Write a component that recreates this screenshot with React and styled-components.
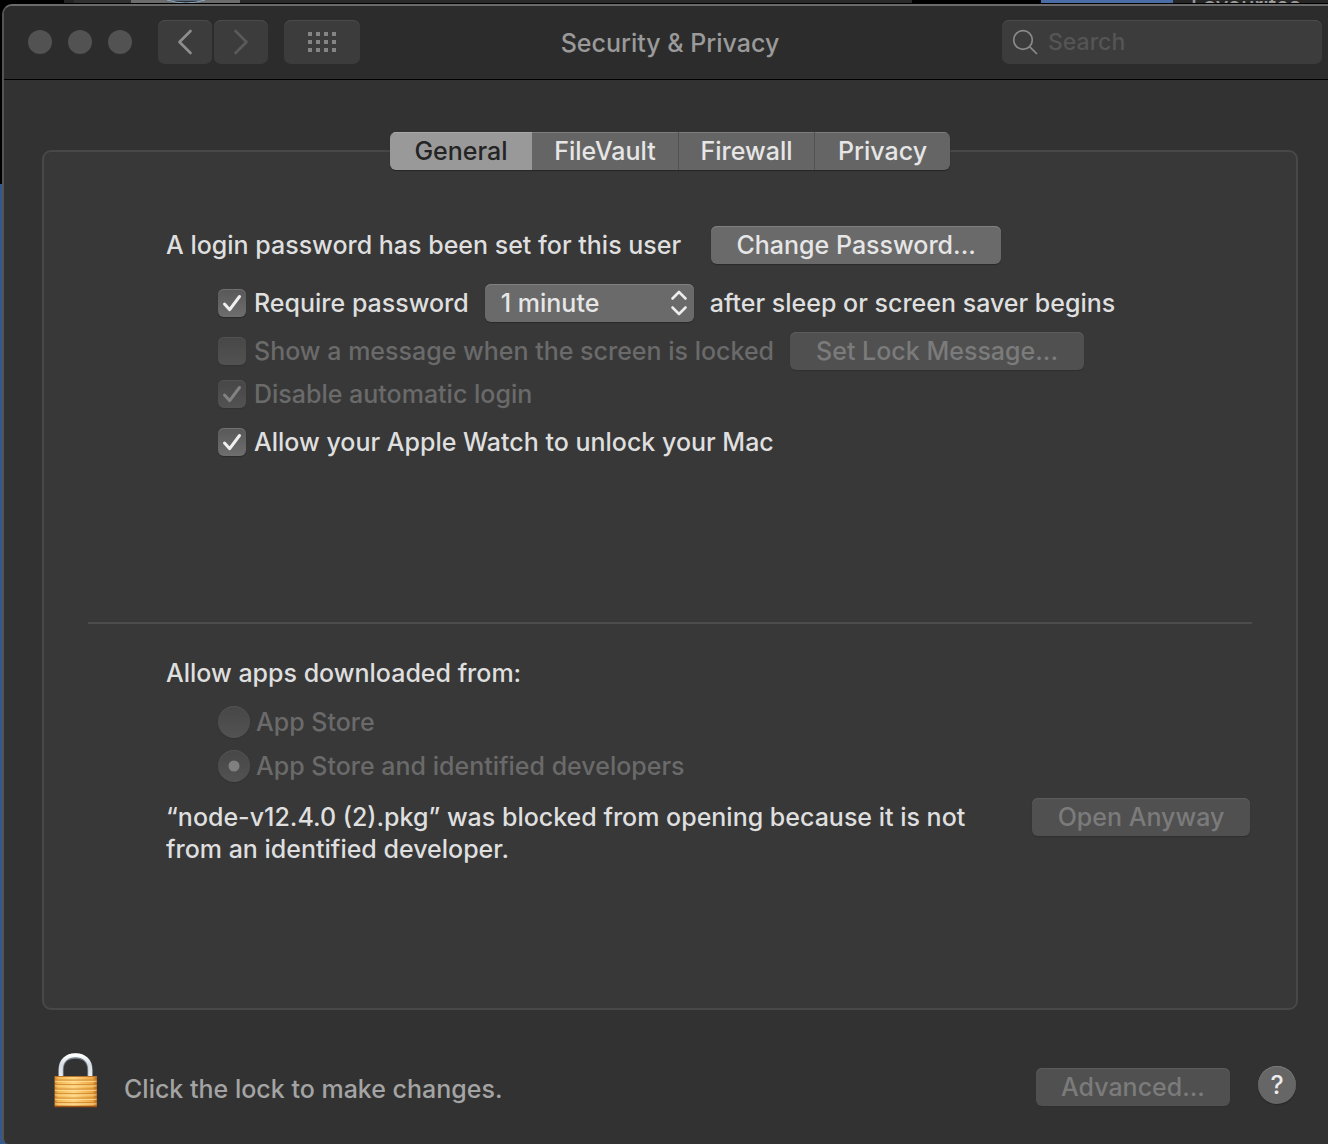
import React, { useState } from 'react';
import styled, { createGlobalStyle, css } from 'styled-components';

const GlobalStyle = createGlobalStyle`
  * {
    box-sizing: border-box;
  }

  body {
    margin: 0;
    background: #323232;
  }

  body, button, input, select {
    font-family: Inter, "Liberation Sans", sans-serif;
    font-size: 25px;
    font-weight: 500;
    line-height: 32px;
    color: #dfdfdf;
  }
`;

const Desktop = styled.div`
  min-height: 100vh;
  display: flex;
  flex-direction: column;
  background: linear-gradient(#000 184px, #34598f 184px);
`;

const BackStrip = styled.div`
  height: 4px;
  display: grid;
  grid-template-columns: 64fr 10fr 57fr 109fr 672fr 129fr 132fr 155fr;
  overflow: hidden;
  border-bottom: 1px solid #000;
`;

const StripPart = styled.div`
  height: 3px;
  overflow: hidden;
  background: ${props => props.$color};
`;

const StripArc = styled.svg`
  display: block;
  margin: 0 auto;
`;

const StripLabel = styled.div`
  height: 24px;
  margin-top: -7px;
  padding-left: 18px;
  font-size: 22px;
  line-height: 24px;
  color: #9a9a9a;
`;

const Window = styled.div`
  flex: 1;
  display: flex;
  flex-direction: column;
  margin-left: 2px;
  border-top: 2px solid #6a6b6a;
  border-left: 2px solid #545454;
  border-radius: 10px 0 0 6px;
  background: #323232;
`;

const TitleBar = styled.header`
  height: 74px;
  display: grid;
  grid-template-columns: 1fr auto 1fr;
  align-items: center;
  padding: 0 6px 2px 14px;
  border-bottom: 1px solid #000;
  border-top-left-radius: 8px;
  background: #2c2c2c;
`;

const BarLeft = styled.div`
  display: flex;
  align-items: center;
  gap: 16px;
  padding-left: 10px;
`;

const Lights = styled.div`
  display: flex;
  gap: 16px;
  margin-right: 10px;
`;

const Light = styled.button`
  width: 24px;
  height: 24px;
  padding: 0;
  border: none;
  border-radius: 50%;
  background: #525252;
`;

const NavGroup = styled.div`
  display: flex;
  gap: 2px;
`;

const barControl = css`
  height: 44px;
  border: none;
  border-radius: 7px;
  background: #3c3c3c;
  box-shadow: inset 0 1px 0 #4b4b4b;
`;

const BarButton = styled.button`
  ${barControl}
  width: ${props => props.$wide ? '76px' : '54px'};
  padding: 0;
  display: flex;
  align-items: center;
  justify-content: center;
`;

const Title = styled.h1`
  margin: 0;
  padding-top: 2px;
  font-size: 25px;
  font-weight: 500;
  line-height: 32px;
  color: #9a9a9a;
`;

const SearchBox = styled.label`
  ${barControl}
  justify-self: end;
  width: 320px;
  display: flex;
  align-items: center;
  gap: 10px;
  padding: 0 10px;
`;

const SearchInput = styled.input`
  flex: 1;
  min-width: 0;
  padding: 0;
  border: none;
  outline: none;
  background: none;
  font-size: 23px;

  &::placeholder {
    color: #555;
    opacity: 1;
  }
`;

const Body = styled.main`
  flex: 1;
  display: flex;
  flex-direction: column;
  padding: 70px 30px 0 38px;
`;

const Panel = styled.section`
  flex: 1;
  border: 2px solid #484848;
  border-radius: 9px;
  background: #383838;
`;

const Tabs = styled.div`
  width: 560px;
  height: 38px;
  margin: -20px auto 0;
  display: grid;
  grid-template-columns: 142px 147px 136px 135px;
  border-radius: 6px;
  overflow: hidden;
  box-shadow: 0 1px 1px #262626;
`;

const Tab = styled.button`
  padding: 0;
  border: none;
  border-right: ${props => props.$divided ? '1px solid #525252' : 'none'};
  background: ${props => props.$active ? '#999' : '#656565'};
  box-shadow: inset 0 1px 0 ${props => props.$active ? '#a8a8a8' : '#7c7c7c'};
  color: ${props => props.$active ? '#242424' : '#e6e6e6'};
`;

const LoginSection = styled.div`
  padding: 56px 44px 0 122px;
  height: 452px;
`;

const Row = styled.div`
  display: flex;
  align-items: center;
  min-height: ${props => props.$short ? '28px' : '38px'};
  margin-top: ${props => props.$gap || '0'};
  padding-left: ${props => props.$indent ? '52px' : '0'};
  white-space: nowrap;
`;

const PushButton = styled.button`
  flex: none;
  width: ${props => props.$width};
  height: 38px;
  margin-left: ${props => props.$space || '0'};
  padding: 0;
  border: none;
  border-radius: 6px;
  background: #6a6a6a;
  box-shadow: inset 0 1px 0 #808080, 0 1px 1px #2a2a2a;
  color: #e6e6e6;

  &:disabled {
    background: #505050;
    box-shadow: inset 0 1px 0 #5c5c5c, 0 1px 1px #303030;
    color: #7b7b7b;
  }
`;

const Choice = styled.label`
  display: flex;
  align-items: center;
  gap: ${props => props.$tight ? '6px' : '8px'};
  color: ${props => props.$dim ? '#6a6a6a' : '#dfdfdf'};
`;

const Mark = styled.span`
  display: grid;
  place-items: center;

  > * {
    grid-area: 1 / 1;
  }

  > svg {
    pointer-events: none;
  }
`;

const Box = styled.input`
  appearance: none;
  width: ${props => props.type === 'radio' ? '32px' : '28px'};
  height: ${props => props.type === 'radio' ? '32px' : '28px'};
  margin: 0;
  border-radius: ${props => props.type === 'radio' ? '50%' : '6px'};
  background: linear-gradient(#585858, #6e6e6e);
  box-shadow: inset 0 1px 0 #717171, 0 1px 1px #2b2b2b;

  &:disabled {
    background: linear-gradient(#474747, #525252);
    box-shadow: inset 0 1px 0 #525252, 0 1px 1px #323232;
  }
`;

const PopUp = styled.span`
  display: grid;
  align-items: center;
  width: 209px;
  margin: 0 16px;

  > * {
    grid-area: 1 / 1;
  }

  > svg {
    justify-self: end;
    margin-right: 6px;
    pointer-events: none;
  }
`;

const Select = styled.select`
  appearance: none;
  width: 100%;
  height: 38px;
  padding: 0 16px;
  border: none;
  border-radius: 6px;
  background: #6a6a6a;
  box-shadow: inset 0 1px 0 #808080, 0 1px 1px #2a2a2a;
  color: #e6e6e6;
`;

const Divider = styled.hr`
  height: 2px;
  margin: 0 44px;
  border: none;
  background: #4c4c4c;
`;

const AppsSection = styled.div`
  padding: 33px 46px 0 122px;
`;

const RadioList = styled.div`
  display: flex;
  flex-direction: column;
  gap: 12px;
  padding: 17px 0 16px 52px;
`;

const Blocked = styled.div`
  display: flex;
  justify-content: space-between;
  align-items: flex-start;
`;

const Text = styled.p`
  margin: 0;
`;

const BlockedText = styled(Text)`
  max-width: 830px;
  padding-top: 3px;
`;

const Footer = styled.footer`
  height: 134px;
  display: flex;
  align-items: center;
  padding: 20px 2px 0 12px;
`;

const LockButton = styled.button`
  display: flex;
  margin-right: 26px;
  padding: 0 0 14px;
  border: none;
  background: none;
`;

const FooterText = styled(Text)`
  flex: 1;
  padding-top: 4px;
  color: #a4a4a4;
`;

const HelpButton = styled.button`
  width: 38px;
  height: 38px;
  margin: 0 0 4px 28px;
  padding: 0;
  border: none;
  border-radius: 50%;
  background: #666;
  box-shadow: inset 0 1px 0 #7a7a7a, 0 1px 1px #262626;
  color: #ececec;
`;

const Chevron = ({ flip, color }) => (
  <svg width="16" height="26" viewBox="0 0 16 26" fill="none" stroke={color} strokeWidth="2.6">
    <path d={flip ? 'M2.5 2 L13.5 13 L2.5 24' : 'M13.5 2 L2.5 13 L13.5 24'} strokeLinecap="round" strokeLinejoin="round" />
  </svg>
);

const GridDots = () => (
  <svg width="28" height="20" viewBox="0 0 28 20" fill="#858585">
    {[0, 8, 16].map(y => [0, 8, 16, 24].map(x => (
      <rect key={`${x}-${y}`} x={x} y={y} width="4" height="4" />
    )))}
  </svg>
);

const SearchIcon = () => (
  <svg width="26" height="26" viewBox="0 0 26 26" fill="none" stroke="#8a8a8a" strokeWidth="1.7">
    <circle cx="11" cy="11" r="9.3" />
    <path d="M17.8 17.8 L25 25" />
  </svg>
);

const Tick = ({ color }) => (
  <svg width="28" height="28" viewBox="0 0 28 28" fill="none" stroke={color} strokeWidth="3">
    <path d="M6.5 15 L11.7 20.7 L21.5 7.5" strokeLinecap="round" strokeLinejoin="round" />
  </svg>
);

const UpDown = () => (
  <svg width="18" height="26" viewBox="0 0 18 26" fill="none" stroke="#ececec" strokeWidth="2.6">
    <path d="M2.5 8.5 L9 2 L15.5 8.5 M2.5 17.5 L9 24 L15.5 17.5" strokeLinecap="round" strokeLinejoin="round" />
  </svg>
);

const Lock = () => (
  <svg width="44" height="56" viewBox="0 0 44 56">
    <defs>
      <linearGradient id="brass" x1="0" y1="0" x2="1" y2="0">
        <stop offset="0" stopColor="#c97a22" />
        <stop offset="0.08" stopColor="#f3b650" />
        <stop offset="0.45" stopColor="#ffd680" />
        <stop offset="0.9" stopColor="#eda741" />
        <stop offset="1" stopColor="#a9611a" />
      </linearGradient>
      <linearGradient id="steel" x1="0" y1="0" x2="0" y2="1">
        <stop offset="0" stopColor="#fff" />
        <stop offset="0.4" stopColor="#d5dbe0" />
        <stop offset="1" stopColor="#eef1f3" />
      </linearGradient>
    </defs>
    <path d="M7 27 V18 C7 9 13 4 21.5 4 C30 4 36 9 36 18 V27" fill="none" stroke="#75818b" strokeWidth="5.4" />
    <path d="M6.8 27 V17.5 C6.8 8.4 13 3.2 21.5 3.2 C30 3.2 36.2 8.4 36.2 17.5 V27" fill="none" stroke="url(#steel)" strokeWidth="4" />
    <rect x="0.5" y="24" width="42.5" height="31" rx="1.5" fill="url(#brass)" />
    {[27.5, 32, 36.5, 41, 45.5, 50].map(y => (
      <g key={y}>
        <rect x="1" y={y} width="41.5" height="1.3" fill="#c9822b" opacity="0.75" />
        <rect x="1" y={y + 1.3} width="41.5" height="1.2" fill="#ffe3a0" opacity="0.7" />
      </g>
    ))}
    <rect x="0.5" y="24" width="42.5" height="1" fill="#b8752c" />
    <rect x="0.5" y="53.8" width="42.5" height="1.4" rx="0.6" fill="#9c4f14" />
  </svg>
);

const tabs = ['General', 'FileVault', 'Firewall', 'Privacy'];

function CheckRow({ label, disabled, initial }) {
  const [checked, setChecked] = useState(initial);

  return (
    <Choice $dim={disabled}>
      <Mark>
        <Box type="checkbox" checked={checked} disabled={disabled} onChange={e => setChecked(e.target.checked)} />
        {checked && <Tick color={disabled ? '#828282' : '#f0f0f0'} />}
      </Mark>
      {label}
    </Choice>
  );
}

function RadioRow({ label, checked }) {
  return (
    <Choice $dim $tight>
      <Mark>
        <Box type="radio" name="source" checked={checked} disabled readOnly />
        {checked && (
          <svg width="12" height="12" viewBox="0 0 12 12">
            <circle cx="6" cy="6" r="5.5" fill="#808080" />
          </svg>
        )}
      </Mark>
      {label}
    </Choice>
  );
}

function App() {
  const [activeTab, setActiveTab] = useState('General');
  const [delay, setDelay] = useState('1 minute');

  return (
    <Desktop>
      <GlobalStyle />
      <BackStrip aria-hidden="true">
        <StripPart $color="#000" />
        <StripPart $color="#242424" />
        <StripPart $color="#303030" />
        <StripPart $color="#6c6c6c">
          <StripArc width="38" height="3" viewBox="0 0 38 3">
            <path d="M0 0 H38 Q19 6 0 0" fill="#2b3138" stroke="#8ba6bd" />
          </StripArc>
        </StripPart>
        <StripPart $color="#2a2a2a" />
        <StripPart $color="#000" />
        <StripPart $color="#4a6da8" />
        <StripPart $color="#262626">
          <StripLabel>Favourites</StripLabel>
        </StripPart>
      </BackStrip>

      <Window>
        <TitleBar>
          <BarLeft>
            <Lights>
              <Light aria-label="Close" />
              <Light aria-label="Minimise" />
              <Light aria-label="Zoom" />
            </Lights>
            <NavGroup>
              <BarButton aria-label="Back"><Chevron color="#8e8e8e" /></BarButton>
              <BarButton aria-label="Forward"><Chevron flip color="#5a5a5a" /></BarButton>
            </NavGroup>
            <BarButton $wide aria-label="Show all"><GridDots /></BarButton>
          </BarLeft>
          <Title>Security &amp; Privacy</Title>
          <SearchBox>
            <SearchIcon />
            <SearchInput type="text" placeholder="Search" aria-label="Search" />
          </SearchBox>
        </TitleBar>

        <Body>
          <Panel>
            <Tabs role="tablist">
              {tabs.map((tab, i) => (
                <Tab
                  key={tab}
                  role="tab"
                  aria-selected={tab === activeTab}
                  $active={tab === activeTab}
                  $divided={i === 1 || i === 2}
                  onClick={() => setActiveTab(tab)}
                >
                  {tab}
                </Tab>
              ))}
            </Tabs>

            <LoginSection>
              <Row>
                <Text>A login password has been set for this user</Text>
                <PushButton $width="290px" $space="30px">Change Password...</PushButton>
              </Row>
              <Row $indent $gap="20px">
                <CheckRow label="Require password" initial />
                <PopUp>
                  <Select aria-label="Password delay" value={delay} onChange={e => setDelay(e.target.value)}>
                    <option>immediately</option>
                    <option>1 minute</option>
                    <option>5 minutes</option>
                  </Select>
                  <UpDown />
                </PopUp>
                <Text>after sleep or screen saver begins</Text>
              </Row>
              <Row $indent $gap="10px">
                <CheckRow label="Show a message when the screen is locked" disabled initial={false} />
                <PushButton $width="294px" $space="16px" disabled>Set Lock Message...</PushButton>
              </Row>
              <Row $indent $short $gap="8px">
                <CheckRow label="Disable automatic login" disabled initial />
              </Row>
              <Row $indent $short $gap="16px">
                <CheckRow label="Allow your Apple Watch to unlock your Mac" initial />
              </Row>
            </LoginSection>

            <Divider />

            <AppsSection>
              <Text>Allow apps downloaded from:</Text>
              <RadioList>
                <RadioRow label="App Store" checked={false} />
                <RadioRow label="App Store and identified developers" checked />
              </RadioList>
              <Blocked>
                <BlockedText>
                  “node-v12.4.0 (2).pkg” was blocked from opening because it is not from an identified developer.
                </BlockedText>
                <PushButton $width="218px" disabled>Open Anyway</PushButton>
              </Blocked>
            </AppsSection>
          </Panel>

          <Footer>
            <LockButton aria-label="Unlock"><Lock /></LockButton>
            <FooterText>Click the lock to make changes.</FooterText>
            <PushButton $width="194px" disabled>Advanced...</PushButton>
            <HelpButton aria-label="Help">?</HelpButton>
          </Footer>
        </Body>
      </Window>
    </Desktop>
  );
}

export default App;
